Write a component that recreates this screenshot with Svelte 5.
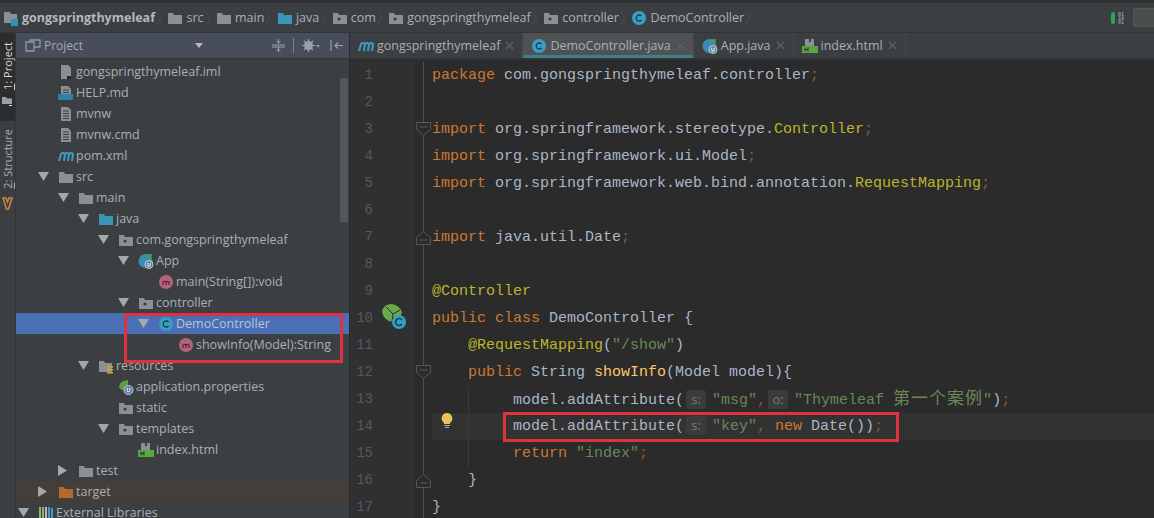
<script>
const crumbs = [
  { icon: "module", label: "gongspringthymeleaf", bold: true },
  { icon: "folder", label: "src" },
  { icon: "folder", label: "main" },
  { icon: "blue", label: "java" },
  { icon: "pkg", label: "com" },
  { icon: "pkg", label: "gongspringthymeleaf" },
  { icon: "pkg", label: "controller" },
  { icon: "cls", label: "DemoController" },
];

const tabs = [
  { icon: "maven", label: "gongspringthymeleaf" },
  { icon: "cls", label: "DemoController.java", active: true },
  { icon: "app", label: "App.java" },
  { icon: "html", label: "index.html" },
];

// depth: 0 = External Libraries level, one step is 20px
const tree = [
  { d: 1, icon: "iml", label: "gongspringthymeleaf.iml" },
  { d: 1, icon: "md", label: "HELP.md" },
  { d: 1, icon: "text", label: "mvnw" },
  { d: 1, icon: "text", label: "mvnw.cmd" },
  { d: 1, icon: "maven", label: "pom.xml" },
  { d: 1, arrow: "open", icon: "folder", label: "src" },
  { d: 2, arrow: "open", icon: "folder", label: "main" },
  { d: 3, arrow: "open", icon: "blue", label: "java" },
  { d: 4, arrow: "open", icon: "pkg", label: "com.gongspringthymeleaf" },
  { d: 5, arrow: "open", icon: "app", label: "App" },
  { d: 6, icon: "method", label: "main(String[]):void" },
  { d: 5, arrow: "open", icon: "pkg", label: "controller" },
  { d: 6, arrow: "open", icon: "cls", label: "DemoController", selected: true },
  { d: 7, icon: "method", label: "showInfo(Model):String" },
  { d: 3, arrow: "open", icon: "res", label: "resources" },
  { d: 4, icon: "spring", label: "application.properties" },
  { d: 4, icon: "pkg", label: "static" },
  { d: 4, arrow: "open", icon: "pkg", label: "templates" },
  { d: 5, icon: "html", label: "index.html" },
  { d: 2, arrow: "shut", icon: "folder", label: "test" },
  { d: 1, arrow: "shut", icon: "orange", label: "target", excluded: true },
  { d: 0, arrow: "open", icon: "libs", label: "External Libraries" },
];

const lines = [
  [["kw", "package"], ["", " com.gongspringthymeleaf.controller"], ["semi", ";"]],
  [],
  [["kw", "import"], ["", " org.springframework.stereotype."], ["ann", "Controller"], ["semi", ";"]],
  [["kw", "import"], ["", " org.springframework.ui.Model"], ["semi", ";"]],
  [["kw", "import"], ["", " org.springframework.web.bind.annotation."], ["ann", "RequestMapping"], ["semi", ";"]],
  [],
  [["kw", "import"], ["", " java.util.Date"], ["semi", ";"]],
  [],
  [["ann", "@Controller"]],
  [["kw", "public class"], ["", " DemoController {"]],
  [["", "    "], ["ann", "@RequestMapping"], ["", "("], ["str", "\"/show\""], ["", ")"]],
  [["", "    "], ["kw", "public"], ["", " String "], ["fn", "showInfo"], ["", "(Model model){"]],
  [["", "         model.addAttribute("], ["hint", "s:"], ["str", "\"msg\""], ["semi", ","], ["hint", "o:"], ["str", "\"Thymeleaf "], ["cjk", "第一个案例"], ["str", "\""], ["", ")"], ["semi", ";"]],
  [["", "         model.addAttribute("], ["hint", "s:"], ["str", "\"key\""], ["semi", ","], ["kw", " new"], ["", " Date())"], ["semi", ";"]],
  [["", "         "], ["kw", "return"], ["str", " \"index\""], ["semi", ";"]],
  [["", "    }"]],
  [["", "}"]],
];

const foldAt = { 3: "top", 7: "end", 12: "top", 16: "end" };
</script>

{#snippet icon(name)}
  <svg class="ico" width="16" height="16" viewBox="0 0 16 16">
    {#if name === "folder" || name === "blue" || name === "orange" || name === "pkg"}
      <path d="M1 3h5l1 2h8v9H1z" fill={name === "blue" ? "#3a95b8" : name === "orange" ? "#b9672f" : "#8b9094"} />
      {#if name === "pkg"}<circle cx="7" cy="9" r="1.6" fill="#3c3f41" />{/if}
    {:else if name === "module"}
      <path d="M1 2h6l1 2h6v9H1z" fill="#8b9094" />
      <rect x="8" y="9" width="7" height="7" fill="#2f93b8" />
    {:else if name === "res"}
      <path d="M1 3h5l1 2h7v9H1z" fill="#8b9094" />
      <path d="M9 8h6v1.500H9zM9 11h6v1.500H9zM9 14h6v1.500H9z" fill="#d6a63c" />
    {:else if name === "cls"}
      <circle cx="8" cy="8" r="7" fill="#3a9dc4" />
      <path d="M10.500 6a3 3 0 1 0 0 4" fill="none" stroke="#1d3f50" stroke-width="1.300" />
    {:else if name === "app"}
      <circle cx="7.500" cy="8" r="7" fill="#3a8db0" />
      <path d="M8 1.500 14 1l-1 6z" fill="#4c9e4a" />
      <circle cx="11" cy="11.500" r="4" fill="#5f7fa8" stroke="#dfe3e6" stroke-width=".8" />
      <path d="M9.800 9.800v2.400a1.200 1.200 0 0 0 2.400 0V9.800" fill="none" stroke="#fff" stroke-width=".9" />
    {:else if name === "method"}
      <circle cx="8" cy="8" r="7" fill="#b8617c" />
      <path d="M5 11V7.500m0 .5q1.500-1.500 3 0v3m0-3q1.500-1.500 3 0v3" fill="none" stroke="#3c2a30" stroke-width="1.100" />
    {:else if name === "maven"}
      <path d="M1 13 3 6q2-2 4 0l-1 7m1-7q2-2 4 0l-1 7m1-7q3-2 4 0l-1 7" fill="none" stroke="#3f9ac6" stroke-width="2" />
    {:else if name === "html"}
      <path d="M3 1h4v3h2V1h3v7H3z" fill="#8b9094" />
      <rect x="0" y="8" width="16" height="7" fill="#5aa63f" />
      <path d="M3 9.500v4m3-4v4m-3-2h3" stroke="#2b2b2b" stroke-width="1" />
    {:else if name === "spring"}
      <path d="M1 8q0-6 9-7 1 8-5 10-3 0-4-3z" fill="#5f9e45" />
      <circle cx="10.500" cy="11" r="4.500" fill="#5f7fa8" stroke="#dfe3e6" stroke-width=".8" />
      <path d="M9.200 9v2.500a1.300 1.300 0 0 0 2.600 0V9" fill="none" stroke="#fff" stroke-width=".9" />
    {:else if name === "libs"}
      <path d="M2 2v12M5 2v12" stroke="#8fb56a" stroke-width="2" />
      <path d="M8 2v12" stroke="#b8bcc0" stroke-width="2" />
      <path d="M11 2v12M14 3v11" stroke="#4b97c0" stroke-width="2" />
    {:else}
      <path d="M3 1h7l3 3v11H3z" fill="#8b9094" />
      {#if name === "text" || name === "md"}
        <path d="M5 5h6M5 7.500h6M5 10h6M5 12.500h6" stroke="#3c3f41" stroke-width="1" />
      {/if}
      {#if name === "md"}<rect x="0" y="9" width="15" height="6" fill="#2f7fa8" />{/if}
      {#if name === "iml"}<rect x="9" y="12" width="4" height="3" fill="#26282a" />{/if}
    {/if}
  </svg>
{/snippet}

<div class="ide">
  <header class="nav">
    {#each crumbs as c}
      <div class="crumb">
        {@render icon(c.icon)}
        <span class:bold={c.bold}>{c.label}</span>
        <svg class="chev" width="6" height="14" viewBox="0 0 6 14"><path d="M1 1l4 6-4 6" fill="none" stroke="#4a4d4f" /></svg>
      </div>
    {/each}
    <div class="status">
      <i class="pill"></i>
      <span class="bits">01<br />10<br />01</span>
      <i class="box"></i>
    </div>
  </header>

  <div class="body">
    <aside class="stripe">
      <div class="stripe-on">
        <span class="vert"><u>1</u>: Project</span>
        <svg width="11" height="11" viewBox="0 0 11 11"><path d="M0 1h4l1 1.500h5V8H0z" fill="#9a9fa3" /><rect x="7" y="9" width="3" height="1" fill="#ddd" /></svg>
      </div>
      <div class="stripe-off">
        <span class="vert"><u>2</u>: Structure</span>
        <svg width="11" height="13" viewBox="0 0 11 13"><path d="M1 1h3l1.500 4L7 1h3L6.500 12h-2z" fill="none" stroke="#c98a3a" stroke-width="1.500" /><circle cx="9.500" cy="1.500" r="1.500" fill="#b8617c" /></svg>
      </div>
    </aside>

    <section class="project">
      <div class="proj-head">
        <svg width="16" height="14" viewBox="0 0 16 14"><path d="M1 3h8v9H1zM5 3V1h10v7H9" fill="none" stroke="#8d99ab" stroke-width="1.300" /></svg>
        <span class="proj-title">Project</span>
        <svg class="caret" width="8" height="5" viewBox="0 0 8 5"><path d="M0 0h8L4 5z" fill="#b4b8bc" /></svg>
        <svg class="tool first" width="13" height="13" viewBox="0 0 13 13"><path d="M6.500 0v5M6.500 8v5M0 6h13M0 8h13M4.500 2l2 2 2-2M4.500 12l2-2 2 2" fill="none" stroke="#9aa1a8" /></svg>
        <i class="sep"></i>
        <svg class="tool gear" width="18" height="13" viewBox="0 0 18 13"><circle cx="6.500" cy="6.500" r="3.300" fill="none" stroke="#9aa1a8" stroke-width="2.400" /><path d="M6.500 0v13M0 6.500h13M2 2l9 9M11 2l-9 9" stroke="#9aa1a8" stroke-width="1.200" /><path d="M14 6h4l-2 2.500z" fill="#9aa1a8" /></svg>
        <svg class="tool hide" width="13" height="13" viewBox="0 0 13 13"><path d="M1 1v11M13 6.500H5M8 3.500l-3 3 3 3" fill="none" stroke="#9aa1a8" stroke-width="1.200" /></svg>
      </div>

      <div class="tree">
        {#each tree as row}
          <div class="row" class:selected={row.selected} class:excluded={row.excluded} style="padding-left: {row.d * 20 + 2}px">
            <span class="arrow">
              {#if row.arrow === "open"}
                <svg width="11" height="9" viewBox="0 0 11 9"><path d="M0 0h11L5.500 9z" fill="#a4a8ac" /></svg>
              {:else if row.arrow === "shut"}
                <svg width="9" height="11" viewBox="0 0 9 11"><path d="M0 0l9 5.500L0 11z" fill="#a4a8ac" /></svg>
              {/if}
            </span>
            {@render icon(row.icon)}
            <span class="name">{row.label}</span>
          </div>
        {/each}
      </div>

      <i class="scrollbar"></i>
    </section>

    <main class="editor">
      <div class="tabs">
        {#each tabs as t}
          <div class="tab" class:active={t.active}>
            {@render icon(t.icon)}
            <span class="tab-name">{t.label}</span>
            <svg class="close" width="9" height="9" viewBox="0 0 9 9"><path d="M1 1l7 7M8 1l-7 7" stroke="#5d6163" stroke-width="1.300" /></svg>
          </div>
        {/each}
      </div>

      <div class="code">
        {#each lines as parts, i}
          <div class="line">
            <span class="num">{i + 1}</span>
            <span class="mark"></span>
            <span class="fold">
              {#if foldAt[i + 1] === "top"}
                <svg width="15" height="15" viewBox="0 0 15 15"><path d="M.5.500h14v7l-7 6-7-6zM3.500 5h8" fill="#2b2b2b" stroke="#55585a" /></svg>
              {:else if foldAt[i + 1] === "end"}
                <svg width="15" height="15" viewBox="0 0 15 15"><path d="M.5 14.500h14v-7l-7-6-7 6zM3.500 10h8" fill="#2b2b2b" stroke="#55585a" /></svg>
              {/if}
            </span>
            <code class="text" class:current={i === 13} class:guide={i >= 12 && i <= 14}>{#each parts as [cls, txt]}{#if cls === "hint"}<span class="hint">{txt}</span>{:else}<span class={cls}>{txt}</span>{/if}{/each}</code>
            {#if i === 9}
              <svg class="bean" width="26" height="27" viewBox="0 0 26 27">
                <path d="M0 8q1-8 10-8 7 1 10 8-2 8-9 10Q2 17 0 8z" fill="#6aa84a" />
                <path d="M4 3l7 7 7-4M11 10l-1 8" stroke="#2b2b2b" fill="none" />
                <circle cx="17" cy="18" r="7" fill="#3a9dc4" />
                <path d="M20 16a3.500 3.500 0 1 0 0 4" fill="none" stroke="#1d3f50" stroke-width="1.500" />
              </svg>
            {:else if i === 13}
              <svg class="bulb" width="12" height="15" viewBox="0 0 12 15">
                <path d="M6 0a5.500 5.500 0 0 0-3 10v1h6v-1A5.500 5.500 0 0 0 6 0z" fill="#e8c25a" />
                <path d="M3 12h6v1H3zM4 14h4v1H4z" fill="#a9a9a9" />
              </svg>
            {/if}
          </div>
        {/each}
      </div>
    </main>
  </div>

  <i class="mark-box tree-box"></i>
  <i class="mark-box code-box"></i>
</div>

<style>
:global(body) {
  margin: 0;
  background: #2b2b2b;
}
.ide {
  position: relative;
  width: 1154px;
  height: 518px;
  overflow: hidden;
  font-family: "Open Sans", "Noto Sans", sans-serif;
  font-size: 12.5px;
  color: #a9b0b6;
  background: #3c3f41;
}
.ico {
  flex: none;
}
.nav {
  height: 29px;
  border-top: 3px solid #2e3032;
  border-bottom: 1px solid #323537;
  display: flex;
  align-items: center;
  padding-left: 3px;
}
.crumb {
  display: flex;
  align-items: center;
  gap: 3px;
  margin-right: 5.5px;
}
.crumb .chev {
  margin-left: -2px;
}
.bold {
  font-weight: 700;
  color: #b4b9bd;
}
.status {
  margin-left: auto;
  display: flex;
  align-items: center;
  gap: 3px;
}
.pill {
  width: 4px;
  height: 12px;
  border-radius: 2px;
  background: #2fa35a;
}
.bits {
  font: 5px/4px "DejaVu Sans Mono", monospace;
  color: #b8bcc0;
}
.box {
  width: 21px;
  height: 19px;
  margin-left: 6px;
  background: #4a4f4c;
  border: 1px solid #55585a;
  border-right: 0;
  border-radius: 3px 0 0 3px;
  box-sizing: border-box;
}
.body {
  display: flex;
  height: 485px;
}
.stripe {
  width: 15px;
  flex: none;
  border-right: 1px solid #323537;
  font-size: 11px;
}
.stripe-on {
  height: 88px;
  padding-top: 9px;
  background: #2b2d2e;
  color: #d8dadc;
  display: flex;
  flex-direction: column;
  align-items: center;
  gap: 6px;
  box-sizing: border-box;
}
.stripe-off {
  padding-top: 8px;
  display: flex;
  flex-direction: column;
  align-items: center;
  gap: 8px;
}
.vert {
  writing-mode: vertical-rl;
  transform: rotate(180deg);
  white-space: nowrap;
  line-height: 15px;
}
.project {
  position: relative;
  width: 333px;
  flex: none;
  border-right: 1px solid #2b2b2b;
}
.proj-head {
  height: 25px;
  display: flex;
  align-items: center;
  padding-left: 9px;
  background: #474d5a;
  border-bottom: 1px solid #323537;
}
.proj-title {
  margin-left: 3px;
  font-size: 12px;
  width: 39px;
  color: #a4a9b2;
}
.caret {
  margin-left: 112px;
}
.tool.first {
  margin-left: 69px;
}
.tool.gear {
  margin-left: 8px;
}
.tool.hide {
  margin-left: 10px;
}
.sep {
  width: 1px;
  height: 15px;
  margin-left: 8px;
  background: #7d838c;
}
.tree {
  padding-top: 2px;
}
.row {
  height: 21px;
  display: flex;
  align-items: center;
  white-space: nowrap;
}
.arrow {
  width: 20px;
  flex: none;
  display: flex;
  align-items: center;
}
.name {
  margin-left: 2px;
}
.selected {
  background: #4a6fb5;
  color: #b9c4d6;
}
.excluded {
  background: #433e39;
}
.scrollbar {
  position: absolute;
  top: 45px;
  right: 1px;
  width: 8px;
  height: 144px;
  background: #55585a;
}
.editor {
  flex: 1;
  min-width: 0;
  background: #2b2b2b;
}
.tabs {
  height: 25px;
  display: flex;
  background: #3c3f41;
  border-bottom: 2px solid #323537;
}
.tab {
  height: 25px;
  display: flex;
  align-items: center;
  padding: 0 8px;
  gap: 3px;
  border-right: 1px solid #45484a;
}
.tab.active {
  background: #4e5254;
  box-shadow: inset 0 -3px 0 #3f7f86;
}
.close {
  margin-left: 2px;
}
.code {
  padding-top: 2px;
}
.line {
  position: relative;
  height: 27px;
  display: flex;
  background: #2f3032;
}
.num {
  width: 23px;
  flex: none;
  text-align: right;
  font: 14px/27px "Liberation Mono", monospace;
  color: #55595c;
}
.mark {
  width: 42px;
  flex: none;
}
.bean {
  position: absolute;
  top: -1px;
  left: 32px;
}
.bulb {
  position: absolute;
  top: 0;
  left: 91px;
}
.fold {
  width: 17px;
  height: 27px;
  flex: none;
  display: flex;
  align-items: center;
  justify-content: center;
  background: linear-gradient(#4a4d4f, #4a4d4f) 8px 0 / 1px 100% no-repeat #2b2b2b;
}
.text {
  flex: 1;
  font: 15px/27px "Liberation Mono", "Noto Sans CJK SC", monospace;
  white-space: pre;
  color: #a9b7c6;
  background-color: #2b2b2b;
}
.current {
  background-color: #323232;
}
.guide {
  background-image: linear-gradient(#3a3a3a, #3a3a3a);
  background-size: 1px 100%;
  background-position: 36px 0;
  background-repeat: no-repeat;
}
.kw {
  color: #cc7832;
}
.semi {
  color: #8a5a2b;
}
.ann {
  color: #bbb529;
}
.str {
  color: #6a8759;
}
.cjk {
  color: #6a8759;
  font-size: 17px;
  letter-spacing: 1px;
}
.fn {
  color: #ffc66d;
}
.hint {
  display: inline-block;
  width: 20px;
  margin: 0 6px 0 2px;
  border-radius: 3px;
  background: #3b3b3b;
  color: #787878;
  font: 13px/19px "Open Sans", sans-serif;
  text-align: center;
}
.mark-box {
  position: absolute;
  border: 3px solid #e0323e;
  box-sizing: border-box;
}
.tree-box {
  left: 124px;
  top: 313px;
  width: 219px;
  height: 50px;
}
.code-box {
  left: 503px;
  top: 412px;
  width: 396px;
  height: 30px;
}
</style>
